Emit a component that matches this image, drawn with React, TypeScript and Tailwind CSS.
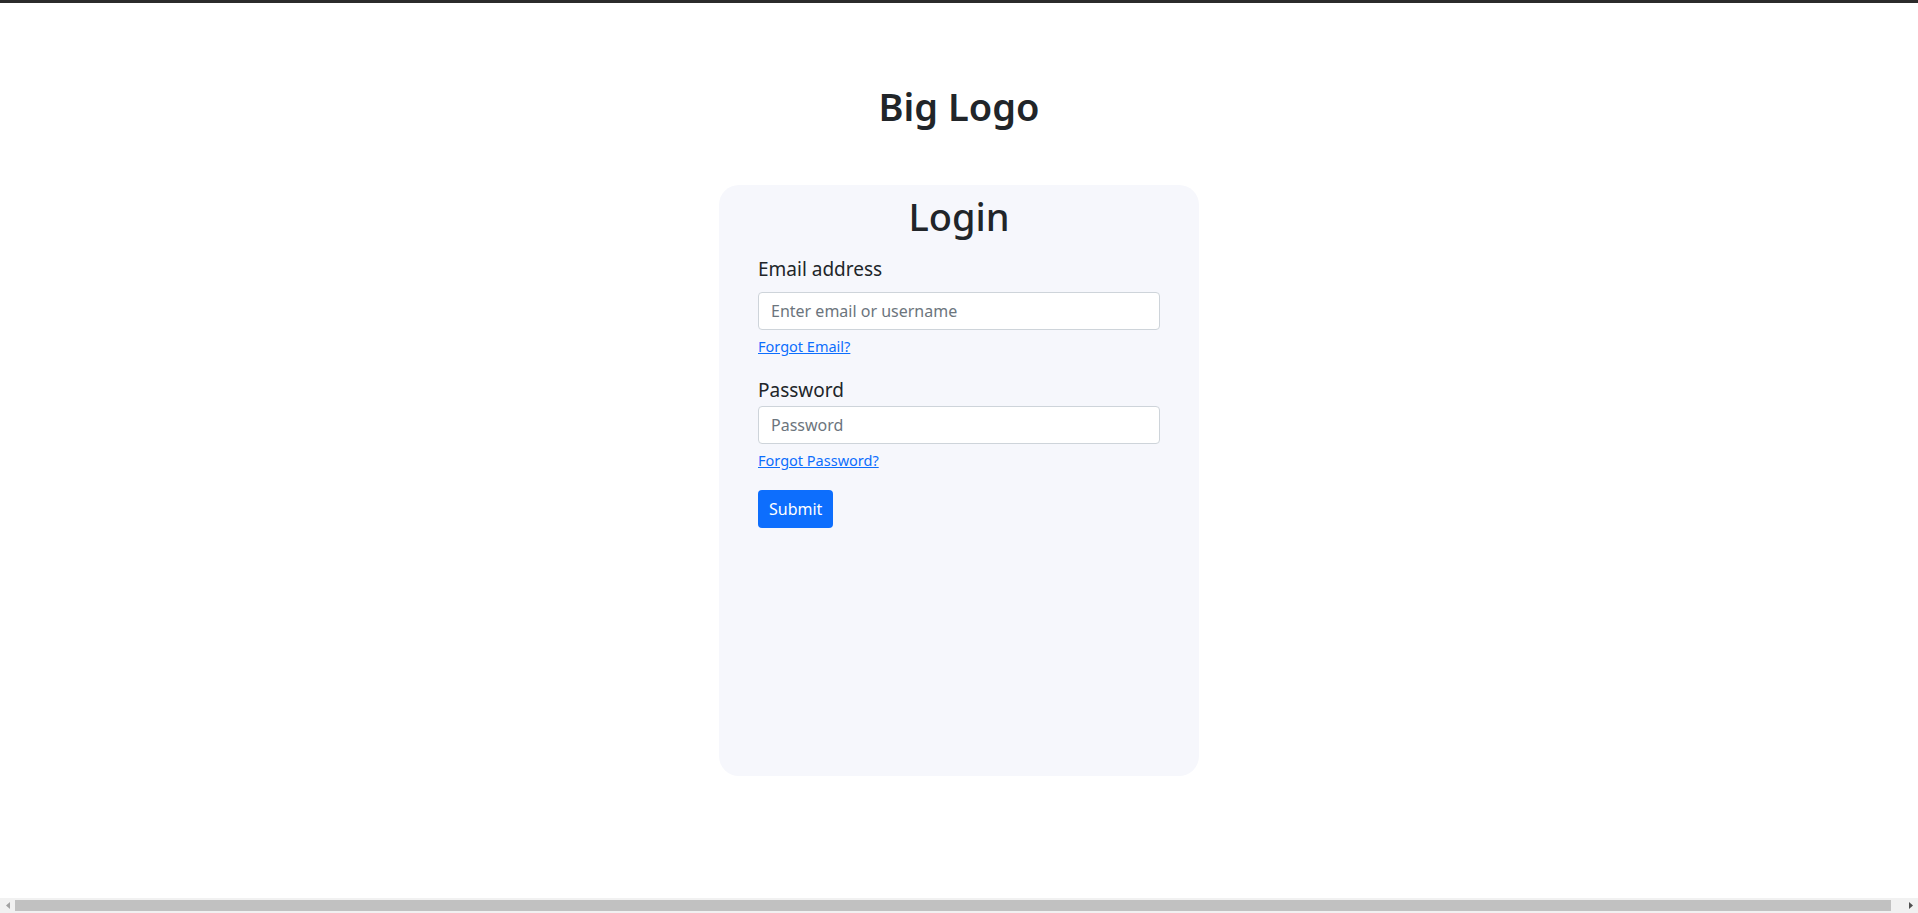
function Scrollbar() {
  return (
    <div className="fixed inset-x-0 bottom-0 flex h-[15px] items-center bg-[#f1f1f1]">
      <div className="flex h-full w-[15px] items-center justify-center">
        <svg width="4" height="7" viewBox="0 0 4 7" fill="#a3a3a3">
          <path d="M4 0 L0 3.5 L4 7 Z" />
        </svg>
      </div>
      <div className="h-[11px] flex-1 bg-[#c1c1c1]" />
      <div className="h-full w-[13px]" />
      <div className="flex h-full w-[14px] items-center justify-center">
        <svg width="4" height="7" viewBox="0 0 4 7" fill="#505050">
          <path d="M0 0 L4 3.5 L0 7 Z" />
        </svg>
      </div>
    </div>
  );
}

export default function App() {
  return (
    <div className="min-h-screen border-t-[3px] border-[#2b2b2b] bg-white font-['Noto_Sans',sans-serif] text-[#212529]">
      <div className="flex flex-col items-center">
        <h1 className="mt-[79px] text-[38px] font-semibold leading-[48px]">Big Logo</h1>
        <div className="mt-[55px] flex h-[591px] w-[480px] flex-col rounded-[20px] bg-[#f6f7fc] px-[39px] pt-[7px]">
          <h2 className="text-center text-[38px] font-medium leading-[48px]">Login</h2>
          <form className="mt-[14px] flex flex-col items-start" onSubmit={(e) => e.preventDefault()}>
            <label htmlFor="email" className="mb-[8px] text-[19px] leading-[30px]">Email address</label>
            <input
              id="email"
              type="text"
              placeholder="Enter email or username"
              className="h-[38px] w-full rounded-[4px] border border-[#ced4da] bg-white px-3 text-base text-[#212529] placeholder:text-[#6c757d] focus:outline-none"
            />
            <a href="#" className="mt-[6px] text-[14.5px] leading-[21px] text-[#0d6efd] underline">Forgot Email?</a>
            <label htmlFor="password" className="mt-[18px] mb-[1px] text-[19px] leading-[30px]">Password</label>
            <input
              id="password"
              type="password"
              placeholder="Password"
              className="h-[38px] w-full rounded-[4px] border border-[#ced4da] bg-white px-3 text-base text-[#212529] placeholder:text-[#6c757d] focus:outline-none"
            />
            <a href="#" className="mt-[6px] text-[14.5px] leading-[21px] text-[#0d6efd] underline">Forgot Password?</a>
            <button type="submit" className="mt-[19px] h-[38px] rounded-[4px] bg-[#0d6efd] px-[11px] text-base text-white">
              Submit
            </button>
          </form>
        </div>
      </div>
      <Scrollbar />
    </div>
  );
}
